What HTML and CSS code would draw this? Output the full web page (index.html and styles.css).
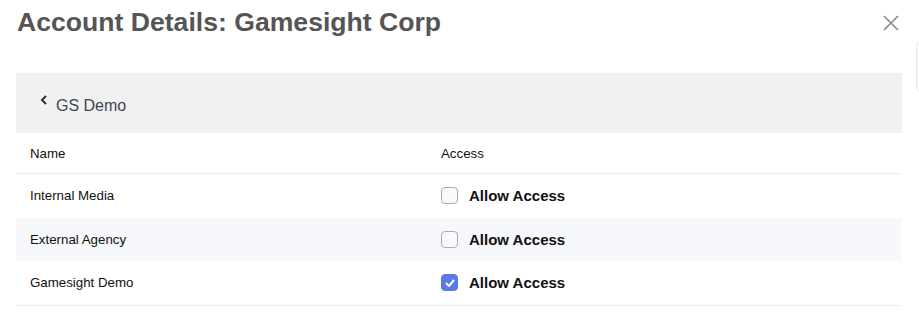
FILE: index.html
```html
<!DOCTYPE html>
<html lang="en">
<head>
    <meta charset="UTF-8">
    <title>Account Details</title>
    <link rel="stylesheet" href="styles.css">
</head>
<body>
    <div class="modal">
        <header class="modal-head">
            <h1>Account Details: Gamesight Corp</h1>
            <button class="close" aria-label="Close">
                <svg width="16" height="16" viewBox="0 0 16 16"><path d="M1 1L15 15M15 1L1 15" stroke="#8a8a8a" stroke-width="1.6" fill="none"/></svg>
            </button>
        </header>
        <div class="crumb">
            <svg class="chevron" width="8" height="10" viewBox="0 0 8 10"><path d="M6 1L2 5L6 9" stroke="#333" stroke-width="2" fill="none"/></svg>
            <span>GS Demo</span>
        </div>
        <table class="access-table">
            <thead>
                <tr><th>Name</th><th>Access</th></tr>
            </thead>
            <tbody>
                <tr>
                    <td>Internal Media</td>
                    <td><label class="check"><span class="box"></span>Allow Access</label></td>
                </tr>
                <tr class="alt">
                    <td>External Agency</td>
                    <td><label class="check"><span class="box"></span>Allow Access</label></td>
                </tr>
                <tr>
                    <td>Gamesight Demo</td>
                    <td><label class="check"><span class="box on"><svg width="10" height="8" viewBox="0 0 10 8"><path d="M1 4L4 7L9 1" stroke="#fff" stroke-width="2" fill="none"/></svg></span>Allow Access</label></td>
                </tr>
            </tbody>
        </table>
    </div>
    <div class="edge-tab"></div>
</body>
</html>
```

FILE: styles.css
```css
body {
    margin: 0;
    background: #fff;
    font-family: "Liberation Sans", Arial, sans-serif;
    overflow: hidden;
}
.modal {
    width: 886px;
    padding: 0 0 0 16px;
}
.modal-head {
    display: flex;
    justify-content: space-between;
    align-items: flex-start;
    height: 73px;
}
.modal-head h1 {
    margin: 4px 0 0 1px;
    font-size: 26.6px;
    font-weight: 700;
    color: #555;
    line-height: 36px;
}
.close {
    border: none;
    background: none;
    padding: 0;
    margin: 15px 3px 0 0;
    width: 16px;
    height: 16px;
}
.crumb {
    background: #f1f1f1;
    height: 60px;
    display: flex;
    align-items: center;
    padding-left: 24px;
    color: #3d4555;
    font-size: 16px;
}
.chevron {
    margin: -6px 8px 0 0;
}
.crumb span {
    padding-top: 6px;
}
.access-table {
    width: 885px;
    border-collapse: collapse;
    font-size: 13.3px;
    color: #111;
}
.access-table th {
    text-align: left;
    font-weight: 400;
    height: 40px;
    padding: 0 14px;
    border-bottom: 1px solid #ebebf2;
}
.access-table th:first-child, .access-table td:first-child {
    width: 383px;
}
.access-table td {
    height: 43.6px;
    padding: 0 14px;
}
.access-table tbody tr:last-child td {
    border-bottom: 1px solid #ebebf2;
}
.access-table tr.alt td {
    background: #f7f8fb;
}
.check {
    display: flex;
    align-items: center;
    font-size: 15px;
    font-weight: 700;
    color: #111;
}
.box {
    width: 17px;
    height: 17px;
    box-sizing: border-box;
    border: 1px solid #a9acb4;
    border-radius: 4px;
    background: #f8f9fc;
    margin-right: 11px;
    display: flex;
    align-items: center;
    justify-content: center;
}
.box.on {
    background: #5b79e6;
    border-color: #5b79e6;
}
.edge-tab {
    position: absolute;
    left: 916px;
    top: 42px;
    width: 20px;
    height: 48px;
    border: 1px solid #e6e6f5;
    border-radius: 4px;
}
```
